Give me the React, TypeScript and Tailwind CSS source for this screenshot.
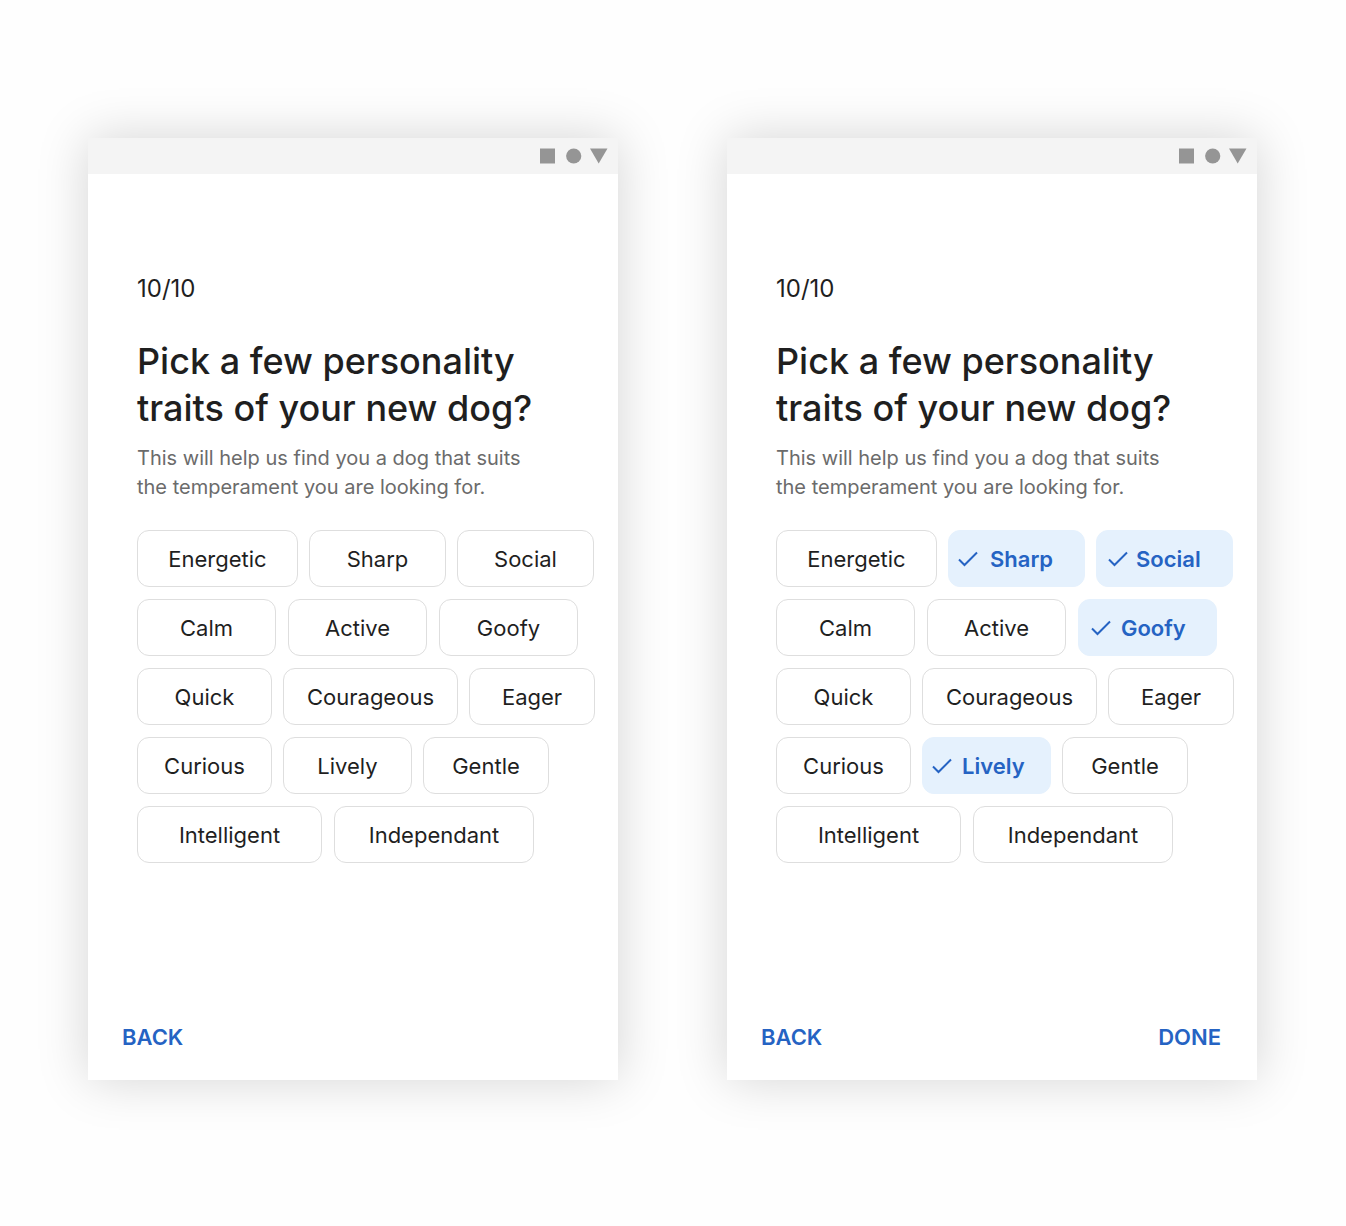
import { useId, useState } from "react";

type Trait = { name: string; size: string; checkedLayout?: string };

const rows: { gap: string; traits: Trait[] }[] = [
  {
    gap: "gap-[11px]",
    traits: [
      { name: "Energetic", size: "w-[161px]" },
      { name: "Sharp", size: "w-[137px]", checkedLayout: "pl-[9px] gap-[12px]" },
      { name: "Social", size: "w-[137px]", checkedLayout: "pl-[11px] gap-[8px]" },
    ],
  },
  {
    gap: "gap-[12px]",
    traits: [
      { name: "Calm", size: "w-[139px]" },
      { name: "Active", size: "w-[139px]" },
      { name: "Goofy", size: "w-[139px]", checkedLayout: "pl-[12px] gap-[10px]" },
    ],
  },
  {
    gap: "gap-[11px]",
    traits: [
      { name: "Quick", size: "w-[135px]" },
      { name: "Courageous", size: "w-[175px]" },
      { name: "Eager", size: "w-[126px]" },
    ],
  },
  {
    gap: "gap-[11px]",
    traits: [
      { name: "Curious", size: "w-[135px]" },
      { name: "Lively", size: "w-[129px]", checkedLayout: "pl-[9px] gap-[10px]" },
      { name: "Gentle", size: "w-[126px]" },
    ],
  },
  {
    gap: "gap-[12px]",
    traits: [
      { name: "Intelligent", size: "w-[185px]" },
      { name: "Independant", size: "w-[200px]" },
    ],
  },
];

function Check() {
  return (
    <svg viewBox="0 0 20 16" className="h-4 w-5 shrink-0" fill="none" stroke="currentColor" strokeWidth="2" aria-hidden="true">
      <path d="M1 8.5 L6.5 14 L19 1.5" />
    </svg>
  );
}

function StatusBar() {
  return (
    <div className="flex h-9 items-center justify-end bg-[#f4f4f4] pr-[10px]">
      <svg width="68" height="16" viewBox="0 0 68 16" fill="#959595" aria-hidden="true">
        <rect x="0" y="0.5" width="15" height="15" />
        <circle cx="33.7" cy="8" r="7.6" />
        <path d="M50 0.5 H67.5 L58.7 15.5 Z" />
      </svg>
    </div>
  );
}

function Chip({ trait, checked, onToggle }: { trait: Trait; checked: boolean; onToggle: () => void }) {
  const id = useId();
  const state = checked
    ? `border-[#e5f1fd] bg-[#e5f1fd] font-semibold text-[#2563c3] ${trait.checkedLayout ?? "pl-[11px] gap-[10px]"}`
    : "justify-center border-[#dedede] bg-white text-[#1f1f1f]";
  return (
    <label
      htmlFor={id}
      className={`relative flex h-[57px] cursor-pointer items-center rounded-xl border text-[22px] leading-7 has-focus-visible:ring-2 ${trait.size} ${state}`}
    >
      <input id={id} type="checkbox" checked={checked} onChange={onToggle} className="sr-only" />
      {checked && <Check />}
      {trait.name}
    </label>
  );
}

function Phone({ initial }: { initial: string[] }) {
  const [picked, setPicked] = useState<string[]>(initial);
  const toggle = (name: string) =>
    setPicked((p) => (p.includes(name) ? p.filter((n) => n !== name) : [...p, name]));

  return (
    <section className="flex flex-col bg-white shadow-[0_0_48px_rgba(0,0,0,0.17)]">
      <StatusBar />
      <div className="pt-[101px] pr-5 pl-[49px]">
        <p className="text-2xl leading-7 text-[#1f1f1f]">10/10</p>
        <h1 className="mt-[35px] text-[36px] leading-[47px] font-medium text-[#1f1f1f]">
          Pick a few personality
          <br />
          traits of your new dog?
        </h1>
        <p className="mt-3 text-[20px] leading-[29px] text-[#6b6b6b]">
          This will help us find you a dog that suits
          <br />
          the temperament you are looking for.
        </p>
        <fieldset aria-label="Personality traits" className="mt-7 flex flex-col gap-3">
          {rows.map((row) => (
            <div key={row.traits[0].name} className={`flex flex-wrap ${row.gap}`}>
              {row.traits.map((t) => (
                <Chip key={t.name} trait={t} checked={picked.includes(t.name)} onToggle={() => toggle(t.name)} />
              ))}
            </div>
          ))}
        </fieldset>
      </div>
      <div className="mt-[160px] flex justify-between pr-9 pb-[29px] pl-[34px] text-[22px] leading-7 font-semibold text-[#2563c3]">
        <button type="button">BACK</button>
        {picked.length > 0 && <button type="button">DONE</button>}
      </div>
    </section>
  );
}

export default function App() {
  return (
    <main className="grid min-h-screen grid-cols-1 content-start gap-[109px] bg-[#fefefe] py-[138px] pr-[89px] pl-[88px] font-['Inter',sans-serif] lg:grid-cols-2">
      <Phone initial={[]} />
      <Phone initial={["Sharp", "Social", "Goofy", "Lively"]} />
    </main>
  );
}
